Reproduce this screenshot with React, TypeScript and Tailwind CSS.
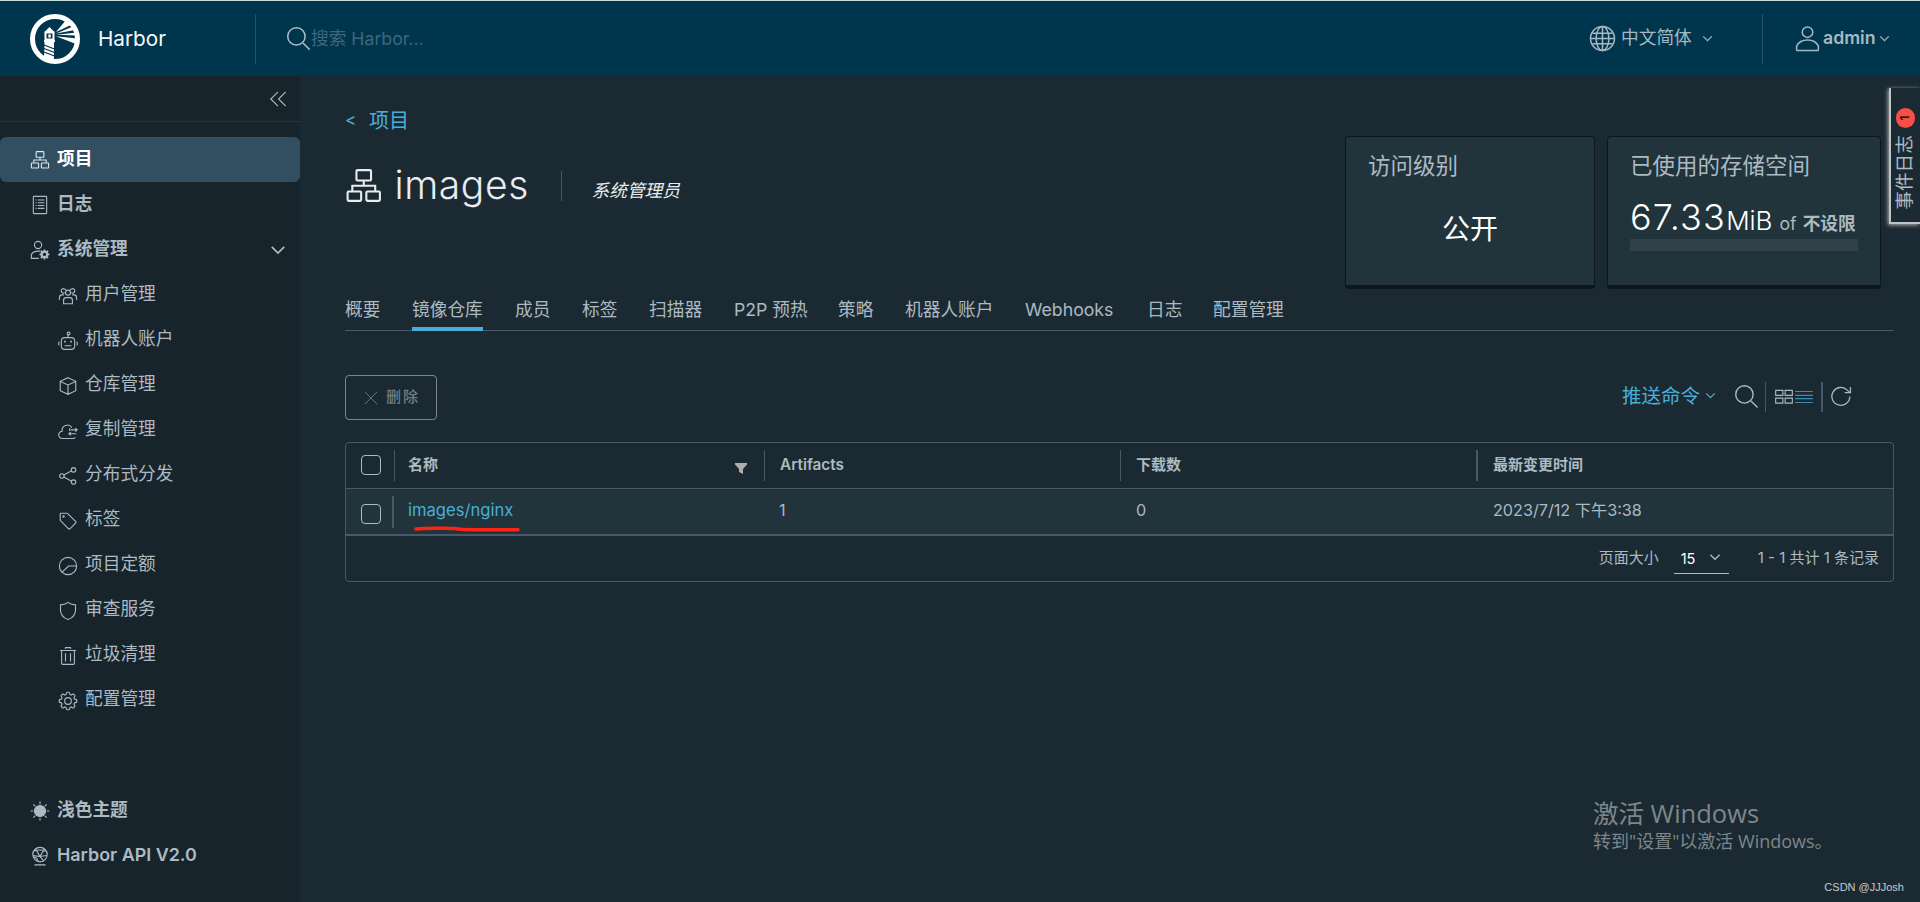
import React from "react";

type IconProps = { className?: string; strokeWidth?: number; children?: React.ReactNode };

function Icon({ className = "h-5 w-5", strokeWidth = 2, children }: IconProps) {
  return (
    <svg viewBox="0 0 36 36" fill="none" stroke="currentColor" strokeWidth={strokeWidth} className={`shrink-0 ${className}`}>
      {children}
    </svg>
  );
}

const orgShape = (
  <>
    <rect x="11" y="3" width="14" height="10" rx="1" />
    <rect x="2.5" y="23.5" width="13" height="9" rx="1" />
    <rect x="20.5" y="23.5" width="13" height="9" rx="1" />
    <path d="M18 13v5M7 23v-5h22v5" />
  </>
);

const gearPath =
  "M33 15.5l-3.4-1.1a12 12 0 0 0-.9-2.2l1.7-3.2a1 1 0 0 0-.2-1.1l-2.1-2.1a1 1 0 0 0-1.1-.2l-3.2 1.7a12 12 0 0 0-2.2-.9L20.5 3a1 1 0 0 0-.9-.7h-3.2a1 1 0 0 0-.9.7l-1.1 3.4a12 12 0 0 0-2.2.9L9 5.6a1 1 0 0 0-1.1.2L5.8 7.900a1 1 0 0 0-.2 1.100l1.7 3.2a12 12 0 0 0-.9 2.2L3 15.5a1 1 0 0 0-.7.9v3.2a1 1 0 0 0 .7.9l3.4 1.1a12 12 0 0 0 .9 2.2L5.600 27a1 1 0 0 0 .2 1.1l2.1 2.1a1 1 0 0 0 1.1.2l3.2-1.7a12 12 0 0 0 2.2.9l1.1 3.4a1 1 0 0 0 .9.7h3.2a1 1 0 0 0 .9-.7l1.1-3.4a12 12 0 0 0 2.2-.9l3.2 1.7a1 1 0 0 0 1.1-.2l2.1-2.1a1 1 0 0 0 .2-1.1l-1.7-3.2a12 12 0 0 0 .9-2.2l3.4-1.1a1 1 0 0 0 .7-.9v-3.2a1 1 0 0 0-.7-.9z";

const systemItems = [
  {
    label: "用户管理",
    icon: (
      <>
        <circle cx="18" cy="12" r="4.5" />
        <path d="M10 32v-6a5 5 0 0 1 5-5h6a5 5 0 0 1 5 5v6zM12 12a4 4 0 1 1-1-7c2 .5 3 2 3 3M24 12a4 4 0 1 0 1-7c-2 .5-3 2-3 3M2.5 25v-4a5 5 0 0 1 5-5h3M33.5 25v-4a5 5 0 0 0-5-5h-3" />
      </>
    ),
  },
  {
    label: "机器人账户",
    icon: (
      <>
        <rect x="6" y="12" width="24" height="21" rx="6" />
        <circle cx="19" cy="4.5" r="2.5" />
        <path d="M18 7v5M1.5 19v7M34.5 19v7M12 26.5h12" />
        <path d="M11 19h3M22 19h3" strokeWidth="3" />
      </>
    ),
  },
  {
    label: "仓库管理",
    icon: <path d="M18 3l14 6.5v17L18 33 4 26.5v-17zM4 10l14 6 14-6M18 16v17" />,
  },
  {
    label: "复制管理",
    icon: (
      <>
        <path d="M31 29.5a5 5 0 0 1-3 2H8a6.500 6.500 0 0 1-.5-13A9.500 9.500 0 0 1 25 12" />
        <path d="M23 16h11M31 13l3.5 3-3.5 3M33 23H20M23 20l-3.5 3 3.5 3M21 13v5" />
      </>
    ),
  },
  {
    label: "分布式分发",
    icon: (
      <>
        <circle cx="7" cy="18" r="4" />
        <circle cx="28" cy="7" r="4" />
        <circle cx="28" cy="29" r="4" />
        <path d="M10.5 16l14-7.5M10.5 20l14 7.5" />
      </>
    ),
  },
  {
    label: "标签",
    icon: (
      <>
        <path d="M4 5a1 1 0 0 1 1-1h11a2 2 0 0 1 1.5.6L32 19a2 2 0 0 1 0 2.5L21.5 32a2 2 0 0 1-2.5 0L4.6 17.5A2 2 0 0 1 4 16z" />
        <circle cx="10" cy="10" r="1.2" />
      </>
    ),
  },
  {
    label: "项目定额",
    icon: (
      <>
        <circle cx="18" cy="18" r="15.5" />
        <path d="M33 18H19L7.5 29" />
      </>
    ),
  },
  {
    label: "审查服务",
    icon: <path d="M18 2.5c4 3 9 4.5 13.5 4.5v9.5c0 8-5 13.5-13.5 17-8.5-3.5-13.5-9-13.5-17V7C9 7 14 5.5 18 2.5z" />,
  },
  {
    label: "垃圾清理",
    icon: <path d="M3.5 8h29M6.5 8v23a2 2 0 0 0 2 2h19a2 2 0 0 0 2-2V8M13.5 13v15M22.5 13v15M13 5V4a1 1 0 0 1 1-1h8a1 1 0 0 1 1 1v1" />,
  },
  {
    label: "配置管理",
    icon: (
      <>
        <path d={gearPath} />
        <circle cx="18" cy="18" r="6" />
      </>
    ),
  },
];

const tabs = [
  { label: "概要", width: "w-[35px]" },
  { label: "镜像仓库", width: "w-[71px]", active: true },
  { label: "成员", width: "w-[35px]" },
  { label: "标签", width: "w-[35px]" },
  { label: "扫描器", width: "w-[53px]" },
  { label: "P2P 预热", width: "w-[72px]" },
  { label: "策略", width: "w-[35px]" },
  { label: "机器人账户", width: "w-[88px]" },
  { label: "Webhooks", width: "w-[90px]" },
  { label: "日志", width: "w-[34px]" },
  { label: "配置管理", width: "w-[71px]" },
];

export default function App() {
  return (
    <div className="flex h-[902px] w-[1920px] flex-col overflow-hidden bg-[#1b2a32] font-['Inter','Noto_Sans_CJK_SC',sans-serif] text-[17.7px] text-[#acbac3]">
      <Header />
      <div className="relative flex min-h-0 flex-1">
        <Sidebar />
        <main className="flex min-w-0 flex-1 flex-col pl-[45px] pr-[26px]">
          <ProjectHeader />
          <Tabs />
          <Toolbar />
          <RepositoryTable />
        </main>
        <EventLog />
        <Watermark />
      </div>
    </div>
  );
}

function Header() {
  return (
    <header className="flex h-[76px] shrink-0 items-center border-t border-[#c9dadb] bg-[#00364d]">
      <div className="flex h-[50px] w-[256px] items-center border-r border-[#27536a] pl-[30px]">
        <HarborLogo />
        <span className="ml-[18px] text-[20.7px] text-[#fafafa]">Harbor</span>
      </div>
      <div className="flex flex-1 items-center text-[#3e677d]">
        <Icon className="ml-[30px] h-[25px] w-[25px] text-[#a9bcc6]" strokeWidth={2.2}>
          <circle cx="15" cy="15" r="12.5" />
          <path d="M24.5 24.5L34 34" />
        </Icon>
        <span className="pt-px">搜索 Harbor...</span>
      </div>
      <div className="flex h-[50px] w-[174px] items-center border-r border-[#27536a] text-[#a5b9c2]">
        <Icon className="h-[27px] w-[27px]">
          <circle cx="18" cy="18" r="16" />
          <ellipse cx="18" cy="18" rx="8.5" ry="16" />
          <path d="M18 2v32M2 18h32M4.5 11h27M4.5 25h27" />
        </Icon>
        <span className="ml-[5px] pb-px">中文简体</span>
        <Caret className="ml-[10px] h-[11px] w-[11px]" />
      </div>
      <div className="flex w-[157px] items-center pl-[31px] text-[#a5b9c2]">
        <Icon className="h-[27px] w-[27px]">
          <circle cx="18" cy="9.5" r="7" />
          <path d="M3.5 33v-5c2.5-5 8-8 14.5-8s12 3 14.5 8v5a1 1 0 0 1-1 1h-27a1 1 0 0 1-1-1z" />
        </Icon>
        <span className="ml-[2px] font-semibold">admin</span>
        <Caret className="ml-[3px] h-[11px] w-[11px]" />
      </div>
    </header>
  );
}

function HarborLogo() {
  return (
    <svg viewBox="0 0 50 50" className="h-[50px] w-[50px] shrink-0">
      <circle cx="25" cy="25" r="22.5" fill="none" stroke="#fff" strokeWidth="5" />
      <path d="M26 18L36 6l7 4zM26 19.500L43 12.500l2 3.500zM26 20.700L47 18.500v3zM26 22.300L47 24.500l-1 5.500z" fill="#fff" />
      <path d="M14 18.500l5.500-5.500 5.500 5.500z" fill="#fff" />
      <path d="M15.500 18.500h8v7h-8z" fill="#00364d" stroke="#fff" strokeWidth="2" />
      <path d="M18.300 20.500h2.500v3h-2.500z" fill="#fff" />
      <path d="M14 26h11v2H14zM14.500 28h9.500v20l-10-3z" fill="#fff" />
      <path d="M14 31l10.500 4M14 34.500l10.500 4M14 38l10.500 4" stroke="#00364d" strokeWidth="1.300" />
    </svg>
  );
}

function Caret({ className = "h-3 w-3" }: { className?: string }) {
  return (
    <Icon className={className} strokeWidth={4}>
      <path d="M4 11l14 14 14-14" />
    </Icon>
  );
}

function Sidebar() {
  return (
    <aside className="flex w-[300px] shrink-0 flex-col bg-[#17242b]">
      <div className="flex h-[46px] items-center justify-end border-b border-[#25333a] pr-[12px]">
        <Icon className="h-5 w-5">
          <path d="M18 5L5 18l13 13M32 5L19 18l13 13" />
        </Icon>
      </div>
      <nav className="mt-[15px] flex flex-col">
        <div className="flex h-[45px] items-center rounded-md bg-[#324f62] pl-[30px] font-bold text-white">
          <Icon className="mt-px h-5 w-5 text-[#dfe6ea]">{orgShape}</Icon>
          <span className="ml-[7px]">项目</span>
        </div>
        <div className="flex h-[45px] items-center pl-[30px] font-bold">
          <Icon>
            <rect x="6" y="2.5" width="24" height="31" rx="1" />
            <path d="M10 9h2M14 9h12M10 14h2M14 14h12M10 19h2M14 19h12M10 24h2M14 24h12" />
          </Icon>
          <span className="ml-[7px]">日志</span>
        </div>
        <div className="flex h-[45px] items-center pl-[30px] pr-[14px] font-bold">
          <Icon>
            <circle cx="14.5" cy="9" r="6.5" />
            <path d="M16 33H2.5v-7c2-4 6-6 12-6h4" />
            <circle cx="26" cy="26" r="5" strokeWidth="4" />
            <path d="M26 17v3M26 32v3M17 26h3M32 26h3M19.5 19.5l2 2M30.5 30.5l2 2M32.5 19.5l-2 2M21.5 30.5l-2 2" strokeWidth="3" />
          </Icon>
          <span className="ml-[7px] flex-1">系统管理</span>
          <Caret className="h-4 w-4" />
        </div>
        {systemItems.map((item) => (
          <div key={item.label} className="flex h-[45px] items-center pb-px pl-[58px]">
            <Icon className="mt-[3px] h-5 w-5">{item.icon}</Icon>
            <span className="ml-[7px]">{item.label}</span>
          </div>
        ))}
      </nav>
      <div className="mb-[24px] mt-auto font-bold">
        <div className="flex h-[45px] items-center pl-[30px]">
          <Icon>
            <circle cx="18" cy="18" r="10" fill="currentColor" />
            <path d="M18 1v5M18 30v5M1 18h5M30 18h5M6 6l3.5 3.5M26.5 26.5L30 30M30 6l-3.5 3.5M9.5 26.5L6 30" />
          </Icon>
          <span className="ml-[7px]">浅色主题</span>
        </div>
        <div className="flex h-[45px] items-center pl-[30px]">
          <Icon className="mt-px h-5 w-5">
            <circle cx="18" cy="15.5" r="13" />
            <path d="M8 34h20M7 9c8-3 15-2 22 0M6 17l12 2 8-14M10 5l8 14 7 8M6 20c3 0 7 1 9 8M18 19l12-2" />
          </Icon>
          <span className="ml-[7px] text-[17.9px] font-semibold">Harbor API V2.0</span>
        </div>
      </div>
    </aside>
  );
}

function ProjectHeader() {
  return (
    <section className="flex h-[214px] justify-between pr-[13px]">
      <div className="pt-[30px]">
        <div className="flex h-[30px] items-center text-[20px] text-[#49afd9]">
          <span className="w-6 text-[17px]">&lt;</span>
          <span>项目</span>
        </div>
        <div className="mt-[24px] flex h-[50px] items-center text-[#eaedf0]">
          <Icon className="mt-[2px] h-[37.5px] w-[37.5px]">{orgShape}</Icon>
          <span className="ml-[12px] w-[136px] text-[39px] font-light leading-[50px] tracking-[0.6px]">images</span>
          <span className="ml-[30px] mt-[2px] h-[30px] w-px bg-[#485764]" />
          <span className="ml-[30px] pt-3 italic">系统管理员</span>
        </div>
      </div>
      <div className="flex gap-3 pt-[60px]">
        <div className="h-[153px] w-[250px] rounded border border-b-4 border-[#0f171c] bg-[#21333b] px-[22px] pt-[11px]">
          <div className="text-[22.5px] leading-9">访问级别</div>
          <div className="mt-[25px] text-center text-[28px] leading-10 text-white">公开</div>
        </div>
        <div className="h-[153px] w-[274px] rounded border border-b-4 border-[#0f171c] bg-[#21333b] px-[22px] pt-[11px]">
          <div className="text-[22.5px] leading-9">已使用的存储空间</div>
          <div className="mt-[12px] flex h-[43px] items-baseline whitespace-nowrap">
            <span className="text-[36px] font-light leading-[42px] tracking-[1.2px] text-white">67.33</span>
            <span className="text-[26px] font-light text-white">MiB</span>
            <span className="ml-[7px]">of</span>
            <span className="ml-[6px] font-bold">不设限</span>
          </div>
          <div className="h-3 bg-[#324148]" />
        </div>
      </div>
    </section>
  );
}

function Tabs() {
  return (
    <div className="flex h-[41px] shrink-0 gap-x-[32px] border-b border-[#485969]">
      {tabs.map((tab) => (
        <div
          key={tab.label}
          className={`h-[41px] whitespace-nowrap pt-[6px] leading-[28px] ${tab.width} ${
            tab.active ? "border-b-4 border-[#49afd9]" : ""
          }`}
        >
          {tab.label}
        </div>
      ))}
    </div>
  );
}

function Toolbar() {
  return (
    <div className="mt-[44px] flex h-[45px] shrink-0 items-center justify-between pr-[41px]">
      <button className="flex h-[45px] w-[92px] items-center rounded border border-[#7b868c] pl-[17px] text-[15px] font-medium text-[#727e84]">
        <Icon className="h-4 w-4">
          <path d="M4 4l28 28M32 4L4 32" />
        </Icon>
        <span className="ml-[7px] tracking-[2px]">删除</span>
      </button>
      <div className="mb-[2px] flex h-[30px] items-center">
        <span className="text-[19.5px] text-[#49afd9]">推送命令</span>
        <Caret className="mb-[2px] ml-[5px] h-[11px] w-[11px] text-[#49afd9]" />
        <Icon className="ml-[18px] h-[25px] w-[25px]">
          <circle cx="15" cy="15" r="12.5" />
          <path d="M24.5 24.5L34 34" />
        </Icon>
        <span className="ml-[6px] h-[30px] w-px bg-[#485969]" />
        <Icon className="ml-[8px] h-5 w-5">
          <path d="M3 6h13v9H3zM20 6h13v9H20zM3 20h13v9H3zM20 20h13v9H20z" />
        </Icon>
        <Icon className="h-5 w-5 text-[#3a8db0]">
          <path d="M2 8h32M2 15h32M2 21h32M2 28h32" />
        </Icon>
        <span className="ml-[7px] h-[30px] w-[2px] bg-[#485969]" />
        <Icon className="ml-[7px] h-[23px] w-[23px]">
          <path d="M31 18a14 14 0 1 1-4-10l4 4M32 3v9h-9" />
        </Icon>
      </div>
    </div>
  );
}

function Checkbox() {
  return <span className="block h-5 w-5 rounded border border-[#acbac3]" />;
}

function RepositoryTable() {
  return (
    <div className="relative mt-[22px] flex h-[140px] shrink-0 flex-col rounded border border-[#485969]">
      <div className="flex h-[46px] items-center border-b border-[#485969] text-[15px] font-bold">
        <div className="w-[48px] pb-px pl-[15px]">
          <Checkbox />
        </div>
        <div className="flex h-[31px] w-[370px] items-center justify-between border-l border-[#485969] pl-[13px] pr-[17px]">
          <span>名称</span>
          <svg viewBox="0 0 12 11" className="mt-[6px] h-[11px] w-3 fill-[#adadad]">
            <path d="M0 0h12v1.5L8 6v5l-4-2V6L0 1.500z" />
          </svg>
        </div>
        <div className="flex h-[31px] w-[356px] items-center border-l border-[#485969] pl-[15px] text-[15.300px] font-semibold">Artifacts</div>
        <div className="flex h-[31px] w-[356px] items-center border-l border-[#485969] pl-[15px]">下载数</div>
        <div className="flex h-[31px] items-center border-l-2 border-[#485969] pl-[15px]">最新变更时间</div>
      </div>
      <div className="flex h-[47px] items-center border-b-2 border-[#485969] bg-[#21333b] text-[16.2px]">
        <div className="w-[46px] pl-[15px] pt-[5px]">
          <Checkbox />
        </div>
        <div className="flex h-8 w-[372px] items-center border-l-2 border-[#485969] pb-[2px] pl-[14px] text-[16.6px] text-[#49afd9]">images/nginx</div>
        <div className="w-[356px] pb-[2px] pl-[15px]">1</div>
        <div className="w-[356px] pb-[2px] pl-[16px]">0</div>
        <div className="pb-[2px] pl-[17px]">2023/7/12 下午3:38</div>
      </div>
      <div className="flex flex-1 items-center justify-end pr-[14px] text-[15px]">
        <span>页面大小</span>
        <div className="-mt-px ml-[15px] flex h-8 w-[55px] items-center border-b border-[#acbac3] pl-[7px] pt-[2px] text-[14.5px] text-white">
          <span className="flex-1">15</span>
          <Caret className="mb-1 mr-[8px] h-3 w-3 text-[#acbac3]" />
        </div>
        <span className="ml-[29px]">1 - 1 共计 1 条记录</span>
      </div>
      {/* hand-drawn marker under the repository name */}
      <svg viewBox="0 0 108 8" className="absolute left-[67px] top-[82px] h-2 w-[108px]">
        <path d="M3 4c12-1.5 26-.5 38-.5 7 1 12 1.5 20 1.3H105" fill="none" stroke="#ff2315" strokeWidth="3.5" strokeLinecap="round" />
      </svg>
    </div>
  );
}

function EventLog() {
  return (
    <div className="absolute right-0 top-[12px] flex h-[136px] w-[31px] flex-col items-center border-b-2 border-l-2 border-[#bfc3c6] bg-[#1b2a32] pl-px pr-[2px] pt-[20px] shadow-[-1px_1px_4px_#b0b0b0]">
      <span className="flex h-5 w-[19px] shrink-0 items-center justify-center rounded-full bg-[#f55047]">
        <span className="-rotate-90 text-[12px] font-medium leading-none text-black">1</span>
      </span>
      <span className="mt-[7px] rotate-180 text-[18.7px] leading-5 [writing-mode:vertical-rl]">
        <span className="[text-orientation:sideways]">事件日志</span>
      </span>
    </div>
  );
}

function Watermark() {
  return (
    <div className="absolute bottom-0 right-0 flex h-[107px] w-[327px] flex-col font-['Open_Sans','Noto_Sans_CJK_SC',sans-serif] text-[#7f868a]">
      <span className="text-[25.5px] leading-9">激活 Windows</span>
      <span className="text-[18px] leading-5">转到"设置"以激活 Windows。</span>
      <span className="mt-auto pb-[6px] pr-4 text-right font-['Liberation_Sans',sans-serif] text-[11px] leading-[18px] text-[#c5cacd]">
        CSDN @JJJosh
      </span>
    </div>
  );
}
